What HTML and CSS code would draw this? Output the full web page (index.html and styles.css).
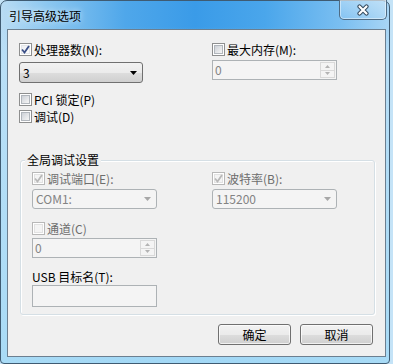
FILE: index.html
```html
<!DOCTYPE html>
<html>
<head>
<title>引导高级选项</title>
<link rel="stylesheet" href="styles.css">
</head>
<body>

<div class="window">
  <div class="titlebar">
    <span class="title">引导高级选项</span>
    <div class="close">
      <svg width="14" height="12" viewBox="0 0 14 12">
        <path d="M3.5 2.5 L10.5 9.5 M10.5 2.5 L3.5 9.5" stroke="#34495d" stroke-width="4.2" stroke-linecap="round"/>
        <path d="M3.5 2.5 L10.5 9.5 M10.5 2.5 L3.5 9.5" stroke="#fff" stroke-width="2.2" stroke-linecap="round"/>
      </svg>
    </div>
  </div>

  <div class="client">
    <div class="top">
      <div class="col col-left">
        <div class="check">
          <span class="box checked">
            <svg width="9" height="9" viewBox="0 0 9 9"><path d="M1 4.5 L3.5 7.5 L8 1" stroke="#3b4f87" stroke-width="1.8" fill="none"/></svg>
          </span>
          处理器数(N):
        </div>
        <div class="combo">
          <span>3</span>
          <svg width="7" height="4" viewBox="0 0 7 4"><path d="M0 0 H7 L3.5 4 Z" fill="#000"/></svg>
        </div>
        <div class="check pci"><span class="box"></span>PCI 锁定(P)</div>
        <div class="check debug"><span class="box"></span>调试(D)</div>
      </div>
      <div class="col col-right">
        <div class="check"><span class="box"></span>最大内存(M):</div>
        <div class="spin">
          <span class="val">0</span>
          <div class="updown">
            <div class="ud"><svg width="5" height="3" viewBox="0 0 5 3"><path d="M2.5 0 L5 3 H0 Z" fill="#b3b3b3"/></svg></div>
            <div class="ud"><svg width="5" height="3" viewBox="0 0 5 3"><path d="M0 0 H5 L2.5 3 Z" fill="#b3b3b3"/></svg></div>
          </div>
        </div>
      </div>
    </div>

    <div class="group">
      <div class="group-title">全局调试设置</div>
      <div class="group-body">
        <div class="col col-left">
          <div class="check disabled">
            <span class="box checked">
              <svg width="9" height="9" viewBox="0 0 9 9"><path d="M1 4.5 L3.5 7.5 L8 1" stroke="#b8b8b8" stroke-width="1.8" fill="none"/></svg>
            </span>
            调试端口(E):
          </div>
          <div class="combo off">
            <span>COM1:</span>
            <svg width="7" height="4" viewBox="0 0 7 4"><path d="M0 0 H7 L3.5 4 Z" fill="#a7a7a7"/></svg>
          </div>
          <div class="check disabled channel"><span class="box"></span>通道(C)</div>
          <div class="spin spin-channel">
            <span class="val">0</span>
            <div class="updown">
              <div class="ud"><svg width="5" height="3" viewBox="0 0 5 3"><path d="M2.5 0 L5 3 H0 Z" fill="#b3b3b3"/></svg></div>
              <div class="ud"><svg width="5" height="3" viewBox="0 0 5 3"><path d="M0 0 H5 L2.5 3 Z" fill="#b3b3b3"/></svg></div>
            </div>
          </div>
          <div class="label">USB 目标名(T):</div>
          <div class="textbox"></div>
        </div>
        <div class="col col-right">
          <div class="check disabled">
            <span class="box checked">
              <svg width="9" height="9" viewBox="0 0 9 9"><path d="M1 4.5 L3.5 7.5 L8 1" stroke="#b8b8b8" stroke-width="1.8" fill="none"/></svg>
            </span>
            波特率(B):
          </div>
          <div class="combo off">
            <span>115200</span>
            <svg width="7" height="4" viewBox="0 0 7 4"><path d="M0 0 H7 L3.5 4 Z" fill="#a7a7a7"/></svg>
          </div>
        </div>
      </div>
    </div>

    <div class="buttons">
      <button class="btn">确定</button>
      <button class="btn">取消</button>
    </div>
  </div>
</div>

</body>
</html>
```

FILE: styles.css
```css
body {
  margin: 0;
  background-color: #c4e3f7;
  font-family: "Noto Sans CJK SC", sans-serif;
  font-size: 12px;
}

.window {
  width: 390px;
  height: 364px;
  box-sizing: border-box;
  border: 1px solid #3f5b72;
  border-radius: 7px 7px 4px 4px;
  display: flex;
  flex-direction: column;
  background:
    linear-gradient(to bottom, rgba(0,0,0,0) 0, rgba(0,0,0,0) 26px, rgba(186,224,247,0.85) 60px, rgba(168,219,246,0.95) 100%),
    linear-gradient(to right, #b9dcf4 0%, #8cc7f0 12%, #4fa7ea 32%, #3a9be8 50%, #4aa6eb 68%, #7bbff1 88%, #a8d5f5 100%);
}

.titlebar {
  height: 28px;
  display: flex;
  align-items: flex-start;
}

.title {
  padding: 7px 0 0 8px;
  line-height: 16px;
  color: #000;
  text-shadow: 0 0 6px rgba(255,255,255,0.9);
}

.close {
  margin: -1px 2px 0 auto;
  width: 48px;
  height: 20px;
  box-sizing: border-box;
  border: 1px solid #4f6b83;
  border-top: none;
  border-radius: 0 0 5px 5px;
  background: linear-gradient(rgba(255,255,255,0.3), rgba(255,255,255,0.08));
  box-shadow: inset 0 0 0 1px rgba(255,255,255,0.45);
  display: flex;
  justify-content: center;
  align-items: center;
}

.client {
  flex: 1;
  margin: 0 3px 6px 6px;
  border: 1px solid #6c7f90;
  background-color: #f0f0f0;
  display: flex;
  flex-direction: column;
}

.top {
  display: flex;
  padding: 13px 0 0 11px;
}

.col {
  display: flex;
  flex-direction: column;
}

.top .col-left {
  width: 124px;
}

.top .col-right {
  width: 125px;
  margin-left: 69px;
}

.check {
  display: flex;
  align-items: center;
  height: 13px;
  line-height: 13px;
  white-space: nowrap;
}

.box {
  width: 13px;
  height: 13px;
  box-sizing: border-box;
  border: 1px solid #8e8f8f;
  background-color: #fff;
  padding: 1px;
  margin-right: 2px;
  display: grid;
  flex-shrink: 0;
}

.box::before {
  content: '';
  grid-area: 1 / 1;
  border: 1px solid #b1b6bc;
  background: linear-gradient(135deg, #cdd1d7, #f6f6f6);
}

.box svg {
  grid-area: 1 / 1;
}

.box.checked::before {
  border-color: #e4e6e9;
  background: linear-gradient(135deg, #eef0f3, #fbfbfb);
}

.disabled {
  color: #6d6d6d;
}

.disabled .box {
  border-color: #b8b8b8;
}

.disabled .box::before {
  border-color: #e2e2e2;
  background: #f4f4f4;
}

.combo {
  margin-top: 6px;
  height: 21px;
  box-sizing: border-box;
  border: 1px solid #707070;
  border-radius: 3px;
  background: linear-gradient(#f2f2f2 0%, #ebebeb 50%, #dddddd 51%, #cfcfcf 100%);
  display: flex;
  align-items: center;
  justify-content: space-between;
  padding: 0 5px 0 3px;
  line-height: 14px;
}

.combo.off {
  margin-top: 4px;
  height: 20px;
  border-color: #adb2b5;
  background: #f4f4f4;
  color: #838383;
  padding-right: 5px;
}

.pci {
  margin-top: 10px;
}

.debug {
  margin-top: 4px;
}

.spin {
  margin-top: 4px;
  height: 20px;
  box-sizing: border-box;
  border: 1px solid #adb2b5;
  background-color: #f4f4f4;
  display: flex;
  color: #838383;
}

.spin .val {
  flex: 1;
  padding-left: 2px;
  line-height: 17px;
}

.updown {
  width: 15px;
  margin: 1px;
  display: flex;
  flex-direction: column;
}

.ud {
  flex: 1;
  border: 1px solid #d9d9d9;
  background-color: #f4f4f4;
  display: flex;
  justify-content: center;
  align-items: center;
}

.ud + .ud {
  border-top: none;
}

.group {
  margin: 37px 10px 0 12px;
  height: 155px;
  box-sizing: border-box;
  border: 1px solid #d5dfe5;
  border-radius: 3px;
  box-shadow: inset 1px 1px 0 #fff, 1px 1px 0 #fff;
}

.group-title {
  width: fit-content;
  margin: -8px 0 0 4px;
  padding: 0 2px;
  line-height: 14px;
  background-color: #f0f0f0;
}

.group-body {
  display: flex;
  padding: 5px 0 0 11px;
}

.group-body .col-left {
  width: 125px;
}

.group-body .col-right {
  width: 125px;
  margin-left: 55px;
}

.channel {
  margin-top: 13px;
}

.spin-channel {
  margin-top: 3px;
}

.label {
  margin-top: 12px;
  height: 13px;
  line-height: 13px;
  color: #000;
  white-space: nowrap;
}

.textbox {
  margin-top: 2px;
  height: 22px;
  box-sizing: border-box;
  border: 1px solid #adb2b5;
  background-color: #f4f4f4;
}

.buttons {
  display: flex;
  justify-content: flex-end;
  gap: 9px;
  margin: 9px 12px 0 0;
}

.btn {
  width: 73px;
  height: 21px;
  padding: 0;
  border: 1px solid #707070;
  border-radius: 3px;
  background: linear-gradient(#f2f2f2 0%, #ebebeb 50%, #dddddd 51%, #cfcfcf 100%);
  box-shadow: inset 0 0 0 1px rgba(255,255,255,0.7);
  font-family: "Noto Sans CJK SC", sans-serif;
  font-size: 12px;
  line-height: 14px;
  color: #000;
}
```
